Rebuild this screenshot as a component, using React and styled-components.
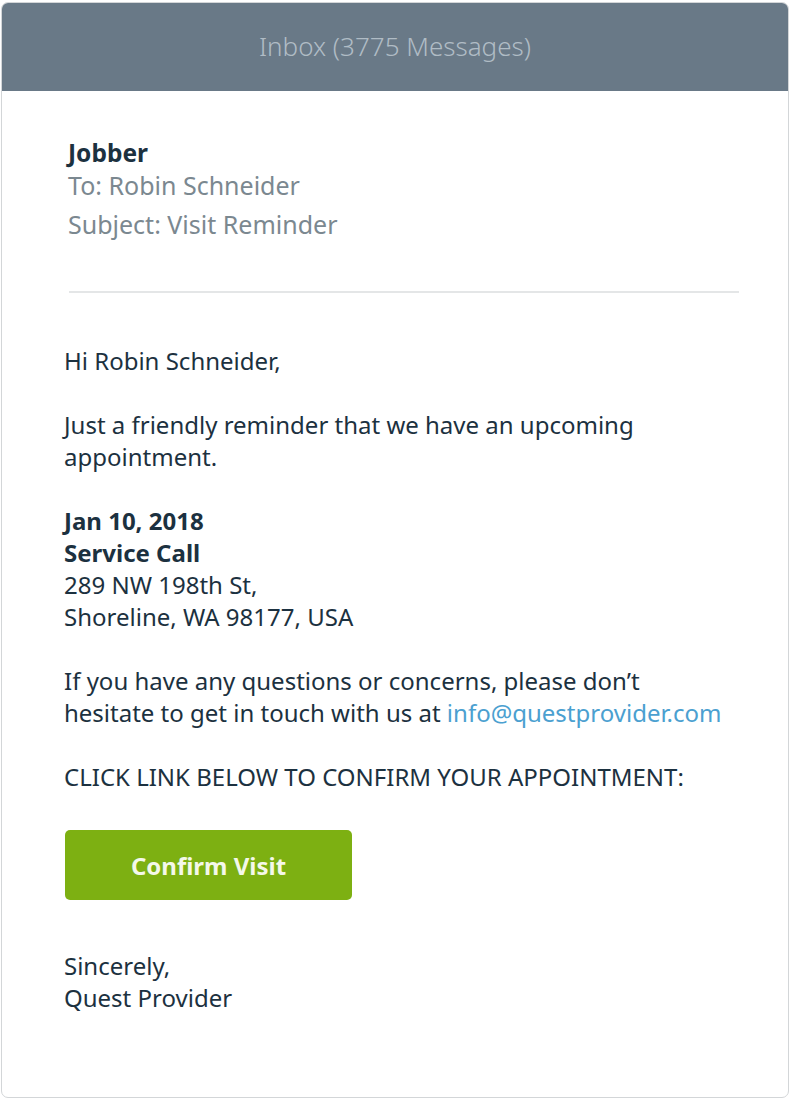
import React from "react";
import styled, { createGlobalStyle } from "styled-components";

const Global = createGlobalStyle`
  html, body { margin: 0; padding: 0; background: #ffffff; }
  body { font-family: "Noto Sans", "Open Sans", sans-serif; }
  * { box-sizing: border-box; }
`;

const Card = styled.div`
  margin: 2px 1px 2px 1px;
  width: 788px;
  height: 1096px;
  border: 1px solid #d3d6d8;
  border-radius: 7px;
  overflow: hidden;
  background: #fff;
  display: flex;
  flex-direction: column;
`;

const Header = styled.div`
  height: 88px;
  background: #697987;
  color: #b0bcc5;
  font-size: 26px;
  font-weight: 300;
  display: flex;
  align-items: center;
  justify-content: center;
  padding-bottom: 3px;
`;

const Body = styled.div`
  padding: 0 30px 0 62px;
  color: #1c3140;
  font-size: 24px;
  line-height: 32px;
`;

const Meta = styled.div`
  padding: 46px 0 0 4px;
  display: flex;
  flex-direction: column;
  font-size: 25px;
`;

const From = styled.div`
  font-weight: 700;
  font-size: 24.5px;
  line-height: 31px;
  color: #1c3140;
`;

const MetaLine = styled.div`
  color: #7b8890;
  line-height: ${(p) => (p.$tall ? "38px" : "35px")};
  padding-top: ${(p) => (p.$tall ? "2px" : "0")};
`;

const Divider = styled.hr`
  border: none;
  border-top: 2px solid #e4e6e7;
  margin: 48px 0 52px 5px;
  width: 670px;
`;

const P = styled.p`
  margin: 0 0 32px 0;
`;

const Strong = styled.span`
  font-weight: 700;
`;

const Link = styled.a`
  color: #4ba0d0;
  text-decoration: none;
`;

const Button = styled.button`
  width: 287px;
  height: 70px;
  margin: 37px 0 50px 1px;
  border: none;
  border-radius: 5px;
  background: #7db012;
  color: #f4f8ea;
  font-family: "Noto Sans", "Open Sans", sans-serif;
  font-size: 24px;
  font-weight: 700;
  display: flex;
  align-items: center;
  justify-content: center;
  padding: 0;
`;

export default function App() {
  return (
    <>
      <Global />
      <Card>
        <Header>Inbox (3775 Messages)</Header>
        <Body>
          <Meta>
            <From>Jobber</From>
            <MetaLine>To: Robin Schneider</MetaLine>
            <MetaLine $tall>Subject: Visit Reminder</MetaLine>
          </Meta>
          <Divider />
          <P>Hi Robin Schneider,</P>
          <P>
            Just a friendly reminder that we have an upcoming
            <br />
            appointment.
          </P>
          <P>
            <Strong>Jan 10, 2018</Strong>
            <br />
            <Strong>Service Call</Strong>
            <br />
            289 NW 198th St,
            <br />
            Shoreline, WA 98177, USA
          </P>
          <P>
            If you have any questions or concerns, please don’t
            <br />
            hesitate to get in touch with us at{" "}
            <Link href="#">info@questprovider.com</Link>
          </P>
          <P>CLICK LINK BELOW TO CONFIRM YOUR APPOINTMENT:</P>
          <Button>Confirm Visit</Button>
          <P>
            Sincerely,
            <br />
            Quest Provider
          </P>
        </Body>
      </Card>
    </>
  );
}
